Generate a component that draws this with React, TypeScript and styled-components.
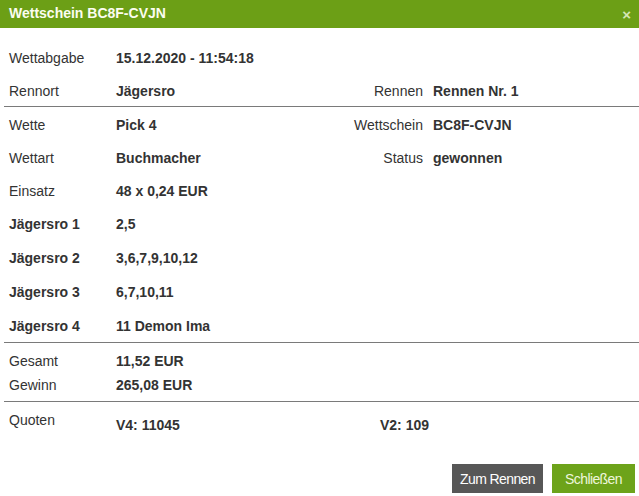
import styled, { createGlobalStyle } from 'styled-components'

const GlobalStyle = createGlobalStyle`
  html, body {
    margin: 0;
    padding: 0;
    background: #ffffff;
  }
  body {
    font-family: 'Liberation Sans', Arial, sans-serif;
    font-size: 14px;
    color: #333333;
  }
`

type Row = { label: string; value: string; strongLabel?: boolean; label2?: string; value2?: string; tall?: boolean }

const topRows: Row[] = [
  { label: 'Wettabgabe', value: '15.12.2020 - 11:54:18' },
  { label: 'Rennort', value: 'Jägersro', label2: 'Rennen', value2: 'Rennen Nr. 1' },
]

const betRows: Row[] = [
  { label: 'Wette', value: 'Pick 4', label2: 'Wettschein', value2: 'BC8F-CVJN' },
  { label: 'Wettart', value: 'Buchmacher', label2: 'Status', value2: 'gewonnen' },
  { label: 'Einsatz', value: '48 x 0,24 EUR' },
  { label: 'Jägersro 1', value: '2,5', strongLabel: true, tall: true },
  { label: 'Jägersro 2', value: '3,6,7,9,10,12', strongLabel: true, tall: true },
  { label: 'Jägersro 3', value: '6,7,10,11', strongLabel: true, tall: true },
  { label: 'Jägersro 4', value: '11 Demon Ima', strongLabel: true, tall: true },
]

export default function App() {
  return (
    <>
      <GlobalStyle />
      <Dialog>
        <Header>
          <Title>Wettschein BC8F-CVJN</Title>
          <Close>×</Close>
        </Header>

        <Section $top={13}>
          {topRows.map((r) => (
            <InfoRow key={r.label} $height={33}>
              <Label $strong={r.strongLabel}>{r.label}</Label>
              <Value>{r.value}</Value>
              <SideLabel>{r.label2}</SideLabel>
              <Value>{r.value2}</Value>
            </InfoRow>
          ))}
        </Section>
        <Divider $gapTop={-1} />

        <Section $top={1}>
          {betRows.map((r) => (
            <InfoRow key={r.label} $height={r.tall ? 34 : 33}>
              <Label $strong={r.strongLabel}>{r.label}</Label>
              <Value>{r.value}</Value>
              <SideLabel>{r.label2}</SideLabel>
              <Value>{r.value2}</Value>
            </InfoRow>
          ))}
        </Section>
        <Divider $gapTop={-1} />

        <Section $top={6} $bottom={4}>
          <InfoRow $height={24}>
            <Label>Gesamt</Label>
            <Value>11,52 EUR</Value>
          </InfoRow>
          <InfoRow $height={24}>
            <Label>Gewinn</Label>
            <Value>265,08 EUR</Value>
          </InfoRow>
        </Section>
        <Divider />

        <QuotenRow>
          <Label>Quoten</Label>
          <QuoteValue>V4: 11045</QuoteValue>
          <QuoteValue>V2: 109</QuoteValue>
        </QuotenRow>

        <Footer>
          <Button $variant="dark" $width={91}>Zum Rennen</Button>
          <Button $variant="green" $width={83}>Schließen</Button>
        </Footer>
      </Dialog>
    </>
  )
}

const Dialog = styled.div`
  width: 639px;
  height: 496px;
  display: flex;
  flex-direction: column;
  background: #ffffff;
`

const Header = styled.div`
  height: 28px;
  background: #6c9f16;
  display: flex;
  align-items: center;
  justify-content: space-between;
  padding: 0 9px;
`

const Title = styled.div`
  color: #fbfdf0;
  font-weight: bold;
  font-size: 14px;
  margin-top: -2px;
`

const Close = styled.span`
  color: #d6e6b4;
  font-weight: bold;
  font-size: 15px;
  margin-right: -1px;
  margin-top: 1px;
`

const Section = styled.div<{ $top?: number; $bottom?: number }>`
  padding: ${(p) => p.$top ?? 0}px 0 ${(p) => p.$bottom ?? 0}px 9px;
  display: flex;
  flex-direction: column;
`

const InfoRow = styled.div<{ $height: number }>`
  display: grid;
  grid-template-columns: 107px 200px 117px 1fr;
  align-items: center;
  height: ${(p) => p.$height}px;
`

const Label = styled.div<{ $strong?: boolean }>`
  font-weight: ${(p) => (p.$strong ? 'bold' : 'normal')};
  white-space: nowrap;
`

const Value = styled.div`
  font-weight: bold;
  white-space: nowrap;
`

const SideLabel = styled.div`
  text-align: right;
  padding-right: 10px;
  white-space: nowrap;
`

const Divider = styled.hr<{ $gapTop?: number }>`
  margin: ${(p) => p.$gapTop ?? 0}px 0 0 4px;
  border: none;
  border-top: 1px solid #7a7a7a;
  height: 0;
`

const QuotenRow = styled.div`
  display: grid;
  grid-template-columns: 107px 264px 1fr;
  padding: 10px 0 0 9px;
  align-items: start;
`

const QuoteValue = styled.div`
  font-weight: bold;
  margin-top: 5px;
`

const Footer = styled.div`
  margin-top: auto;
  display: flex;
  justify-content: flex-end;
  gap: 9px;
  padding: 0 4px 3px 0;
`

const Button = styled.button<{ $variant: 'dark' | 'green'; $width: number }>`
  width: ${(p) => p.$width}px;
  height: 29px;
  border: none;
  padding: 0;
  font-family: 'Liberation Sans', Arial, sans-serif;
  font-size: 14px;
  letter-spacing: -0.6px;
  cursor: pointer;
  background: ${(p) => (p.$variant === 'dark' ? '#575757' : '#6da31a')};
  color: ${(p) => (p.$variant === 'dark' ? '#ffffff' : '#eef6dc')};
`
